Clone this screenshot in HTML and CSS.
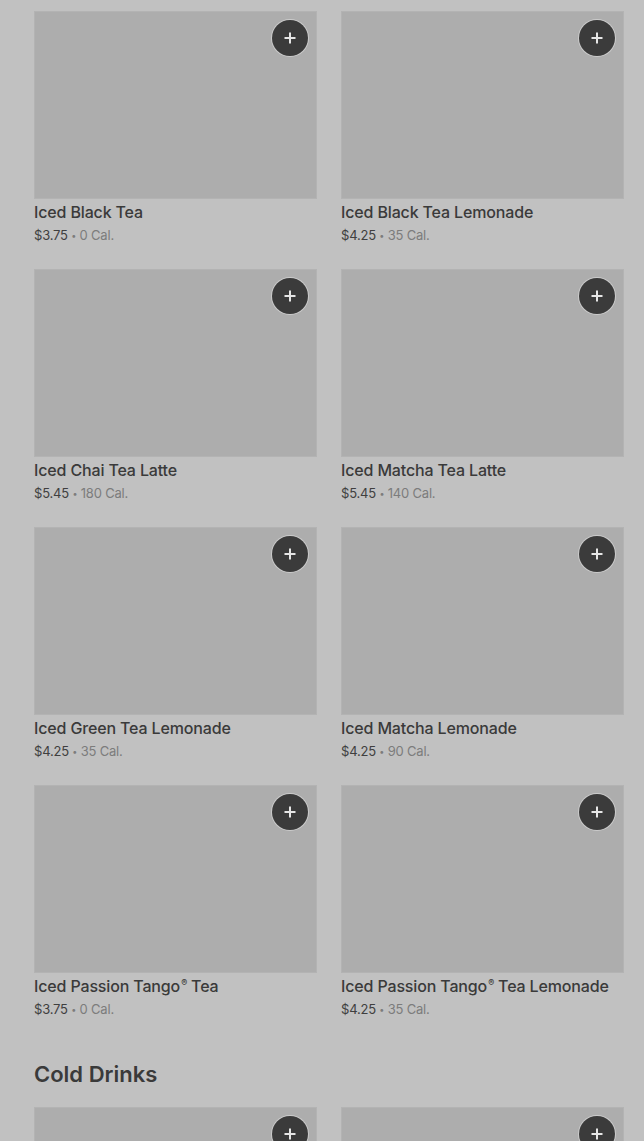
FILE: index.html
```html
<html>
    <head>
        <link rel="stylesheet" href="styles.css">
        <meta name="viewport" content="width=device-width, initial-scale=1.0">
        <title>Menu</title>
    </head>
    <body>
        <div class="menu">
            <div class="grid">
                <div class="card">
                    <div class="thumb"><a class="add"><svg viewBox="0 0 14 14" width="14" height="14"><path d="M7 1.5v11M1.5 7h11" /></svg></a></div>
                    <p class="name">Iced Black Tea</p>
                    <p class="meta"><span class="price">$3.75</span> <span class="dot">•</span> <span class="cal">0 Cal.</span></p>
                </div>
                <div class="card">
                    <div class="thumb"><a class="add"><svg viewBox="0 0 14 14" width="14" height="14"><path d="M7 1.5v11M1.5 7h11" /></svg></a></div>
                    <p class="name">Iced Black Tea Lemonade</p>
                    <p class="meta"><span class="price">$4.25</span> <span class="dot">•</span> <span class="cal">35 Cal.</span></p>
                </div>
                <div class="card">
                    <div class="thumb"><a class="add"><svg viewBox="0 0 14 14" width="14" height="14"><path d="M7 1.5v11M1.5 7h11" /></svg></a></div>
                    <p class="name">Iced Chai Tea Latte</p>
                    <p class="meta"><span class="price">$5.45</span> <span class="dot">•</span> <span class="cal">180 Cal.</span></p>
                </div>
                <div class="card">
                    <div class="thumb"><a class="add"><svg viewBox="0 0 14 14" width="14" height="14"><path d="M7 1.5v11M1.5 7h11" /></svg></a></div>
                    <p class="name">Iced Matcha Tea Latte</p>
                    <p class="meta"><span class="price">$5.45</span> <span class="dot">•</span> <span class="cal">140 Cal.</span></p>
                </div>
                <div class="card">
                    <div class="thumb"><a class="add"><svg viewBox="0 0 14 14" width="14" height="14"><path d="M7 1.5v11M1.5 7h11" /></svg></a></div>
                    <p class="name">Iced Green Tea Lemonade</p>
                    <p class="meta"><span class="price">$4.25</span> <span class="dot">•</span> <span class="cal">35 Cal.</span></p>
                </div>
                <div class="card">
                    <div class="thumb"><a class="add"><svg viewBox="0 0 14 14" width="14" height="14"><path d="M7 1.5v11M1.5 7h11" /></svg></a></div>
                    <p class="name">Iced Matcha Lemonade</p>
                    <p class="meta"><span class="price">$4.25</span> <span class="dot">•</span> <span class="cal">90 Cal.</span></p>
                </div>
                <div class="card">
                    <div class="thumb"><a class="add"><svg viewBox="0 0 14 14" width="14" height="14"><path d="M7 1.5v11M1.5 7h11" /></svg></a></div>
                    <p class="name">Iced Passion Tango<sup>®</sup> Tea</p>
                    <p class="meta"><span class="price">$3.75</span> <span class="dot">•</span> <span class="cal">0 Cal.</span></p>
                </div>
                <div class="card">
                    <div class="thumb"><a class="add"><svg viewBox="0 0 14 14" width="14" height="14"><path d="M7 1.5v11M1.5 7h11" /></svg></a></div>
                    <p class="name">Iced Passion Tango<sup>®</sup> Tea Lemonade</p>
                    <p class="meta"><span class="price">$4.25</span> <span class="dot">•</span> <span class="cal">35 Cal.</span></p>
                </div>
            </div>

            <h2 class="section">Cold Drinks</h2>

            <div class="grid">
                <div class="card">
                    <div class="thumb"><a class="add"><svg viewBox="0 0 14 14" width="14" height="14"><path d="M7 1.5v11M1.5 7h11" /></svg></a></div>
                </div>
                <div class="card">
                    <div class="thumb"><a class="add"><svg viewBox="0 0 14 14" width="14" height="14"><path d="M7 1.5v11M1.5 7h11" /></svg></a></div>
                </div>
            </div>
        </div>
    </body>
</html>
```

FILE: styles.css
```css
html, body {margin: 0; padding: 0; background: #c1c1c1;}
body {font-family: Inter, "Liberation Sans", sans-serif; color: #3b3b3b; overflow: hidden;}

.menu {padding: 11px 20px 0 34px;}

.grid {
    display: grid;
    grid-template-columns: 283px 283px;
    column-gap: 24px;
    row-gap: 24px;
}

.thumb {
    display: flex;
    justify-content: flex-end;
    align-items: flex-start;
    height: 188px;
    padding: 9px;
    box-sizing: border-box;
    background: #adadad;
    box-shadow: inset 0 0 0 1px #b3b3b3;
}

.add {
    display: flex;
    align-items: center;
    justify-content: center;
    width: 36px;
    height: 36px;
    border-radius: 50%;
    background: #3b3b3b;
    box-shadow: 0 0 0 1px #cbcbcb;
}

.add svg path {stroke: #e6e6e6; stroke-width: 2; fill: none;}

.name {
    margin: 3px 0 0 0;
    height: 20px;
    font-size: 16px;
    line-height: 20px;
    font-weight: 500;
    letter-spacing: -0.15px;
    color: #3a3a3a;
    white-space: nowrap;
}

.name sup {font-size: 9px; line-height: 0; vertical-align: 6px; margin-left: 1px;}

.meta {
    margin: 3px 0 0 0;
    height: 20px;
    font-size: 13px;
    line-height: 20px;
    letter-spacing: -0.2px;
}

.price {color: #3f3f3f;}
.dot {color: #7c7c7c; font-size: 9px; line-height: 0; vertical-align: 1px;}
.cal {color: #7c7c7c;}

.section {
    margin: 41px 0 19px 0;
    font-size: 22px;
    line-height: 28px;
    font-weight: 600;
    letter-spacing: 0;
    color: #3a3a3a;
}
```
